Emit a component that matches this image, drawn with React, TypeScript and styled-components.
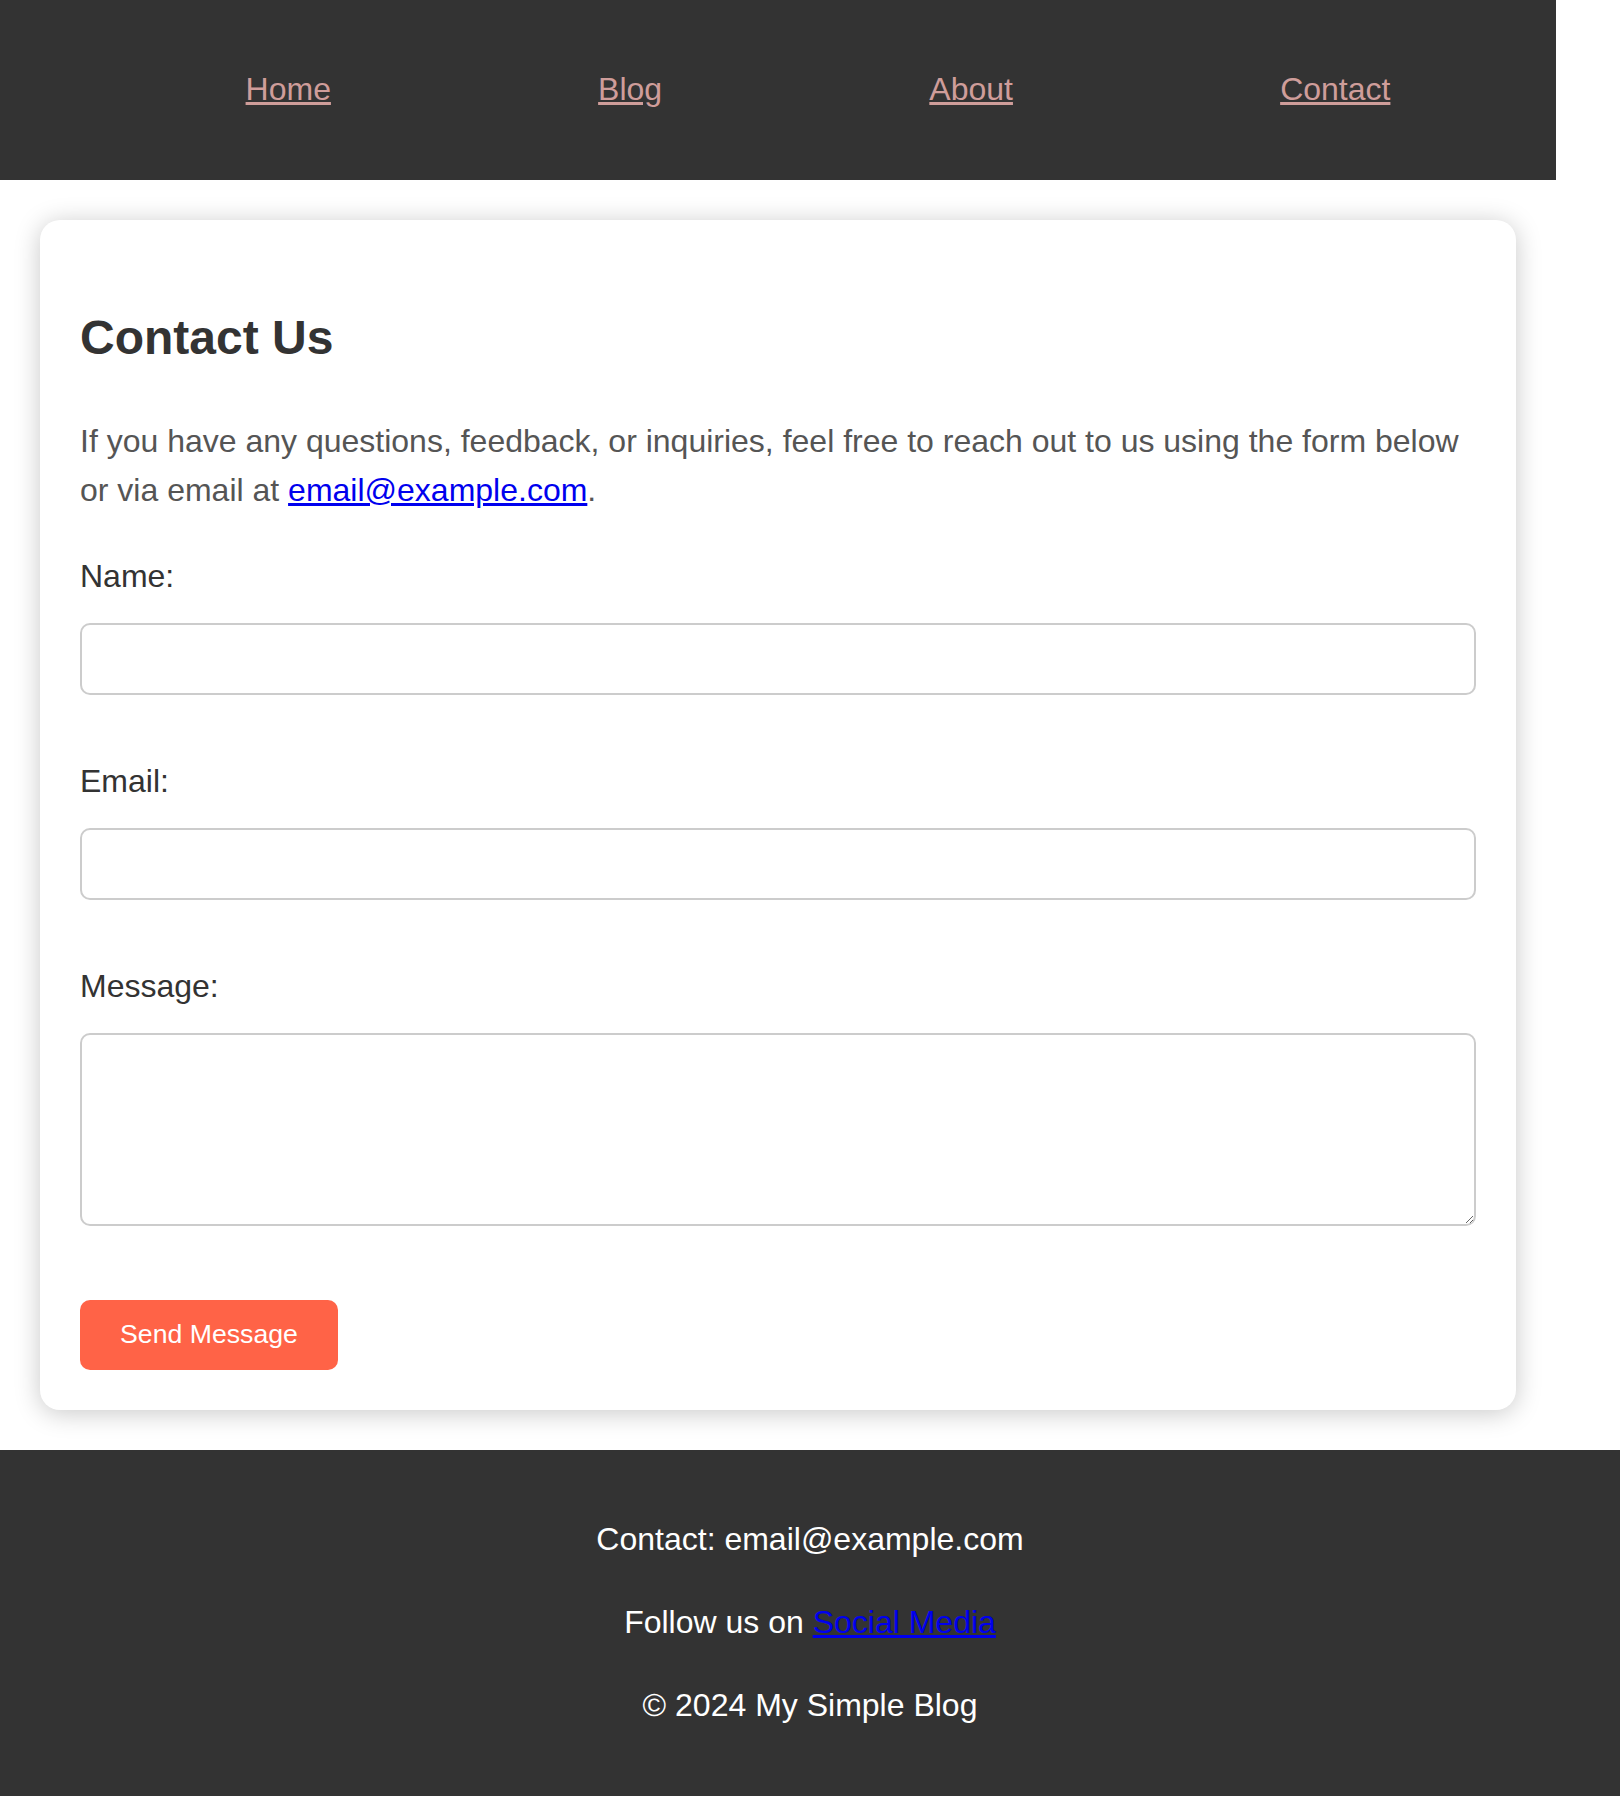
import React from "react";
import styled, { createGlobalStyle } from "styled-components";

const GlobalStyle = createGlobalStyle`
  html, body {
    margin: 0;
    padding: 0;
    background: #ffffff;
  }
  body {
    font-family: "Liberation Sans", Arial, Helvetica, sans-serif;
    font-size: 32px;
    color: #333333;
  }
  * { box-sizing: border-box; }
`;

const Page = styled.div`
  width: 1556px;
`;

const NavBar = styled.nav`
  height: 180px;
  background: #333333;
  padding: 0 32px;
  display: flex;
  align-items: center;
`;

const NavList = styled.ul`
  flex: 1;
  list-style: none;
  margin: 0;
  padding: 0 0 2px 80px;
  display: flex;
  justify-content: space-around;
`;

const NavItem = styled.li`
  line-height: 1.15;
`;

const NavLink = styled.a`
  color: #cf9d9a;
  text-decoration: underline;
  font-size: 32px;
`;

const Card = styled.main`
  margin: 40px 40px;
  padding: 40px;
  background: #ffffff;
  border-radius: 20px;
  box-shadow: 0 3px 26px rgba(0, 0, 0, 0.22);
`;

const Title = styled.h2`
  margin: 40px 0 40px;
  font-size: 48px;
  font-weight: 700;
  line-height: 1.6;
  color: #333333;
`;

const Intro = styled.p`
  margin: 0 0 36px;
  font-size: 32px;
  line-height: 1.55;
  color: #555555;
`;

const MailLink = styled.a`
  color: #0000ee;
  text-decoration: underline;
`;

const Form = styled.form`
  display: flex;
  flex-direction: column;
`;

const Label = styled.label`
  display: block;
  font-size: 32px;
  line-height: 48px;
  color: #333333;
  margin-bottom: 23px;
`;

const Field = styled.div<{ $gap: number }>`
  display: flex;
  flex-direction: column;
  margin-bottom: ${(p) => p.$gap}px;
`;

const TextInput = styled.input`
  display: block;
  width: 100%;
  height: 72px;
  margin: 0;
  padding: 20px;
  border: 2px solid #cccccc;
  border-radius: 10px;
  font-family: "Liberation Sans", Arial, sans-serif;
  font-size: 32px;
  background: #ffffff;
  outline: none;
`;

const TextArea = styled.textarea`
  display: block;
  width: 100%;
  height: 193px;
  margin: 0;
  padding: 20px;
  border: 2px solid #cccccc;
  border-radius: 10px;
  font-family: "Liberation Sans", Arial, sans-serif;
  font-size: 32px;
  background: #ffffff;
  outline: none;
`;

const SendButton = styled.button`
  align-self: flex-start;
  width: 258px;
  height: 70px;
  padding: 0 40px;
  border: none;
  border-radius: 10px;
  background: #ff6347;
  color: #ffffff;
  font-family: "Liberation Sans", Arial, sans-serif;
  font-size: 26.67px;
  cursor: pointer;
`;

const Footer = styled.footer`
  width: 1620px;
  background: #333333;
  color: #ffffff;
  text-align: center;
  padding: 32px;
`;

const FooterLine = styled.p`
  margin: 32px 0;
  font-size: 32px;
  line-height: 1.6;
`;

const FooterLink = styled.a`
  color: #0000ee;
  text-decoration: underline;
`;

export default function App() {
  return (
    <>
      <GlobalStyle />
      <Page>
        <NavBar>
          <NavList>
            <NavItem><NavLink href="#">Home</NavLink></NavItem>
            <NavItem><NavLink href="#">Blog</NavLink></NavItem>
            <NavItem><NavLink href="#">About</NavLink></NavItem>
            <NavItem><NavLink href="#">Contact</NavLink></NavItem>
          </NavList>
        </NavBar>
        <Card>
          <Title>Contact Us</Title>
          <Intro>
            If you have any questions, feedback, or inquiries, feel free to reach out to us using the form below or via email at{" "}
            <MailLink href="#">email@example.com</MailLink>.
          </Intro>
          <Form onSubmit={(e) => e.preventDefault()}>
            <Field $gap={62}>
              <Label htmlFor="name">Name:</Label>
              <TextInput id="name" type="text" />
            </Field>
            <Field $gap={62}>
              <Label htmlFor="email">Email:</Label>
              <TextInput id="email" type="email" />
            </Field>
            <Field $gap={74}>
              <Label htmlFor="message">Message:</Label>
              <TextArea id="message" />
            </Field>
            <SendButton type="submit">Send Message</SendButton>
          </Form>
        </Card>
      </Page>
      <Footer>
        <FooterLine>Contact: email@example.com</FooterLine>
        <FooterLine>
          Follow us on <FooterLink href="#">Social Media</FooterLink>
        </FooterLine>
        <FooterLine>© 2024 My Simple Blog</FooterLine>
      </Footer>
    </>
  );
}
